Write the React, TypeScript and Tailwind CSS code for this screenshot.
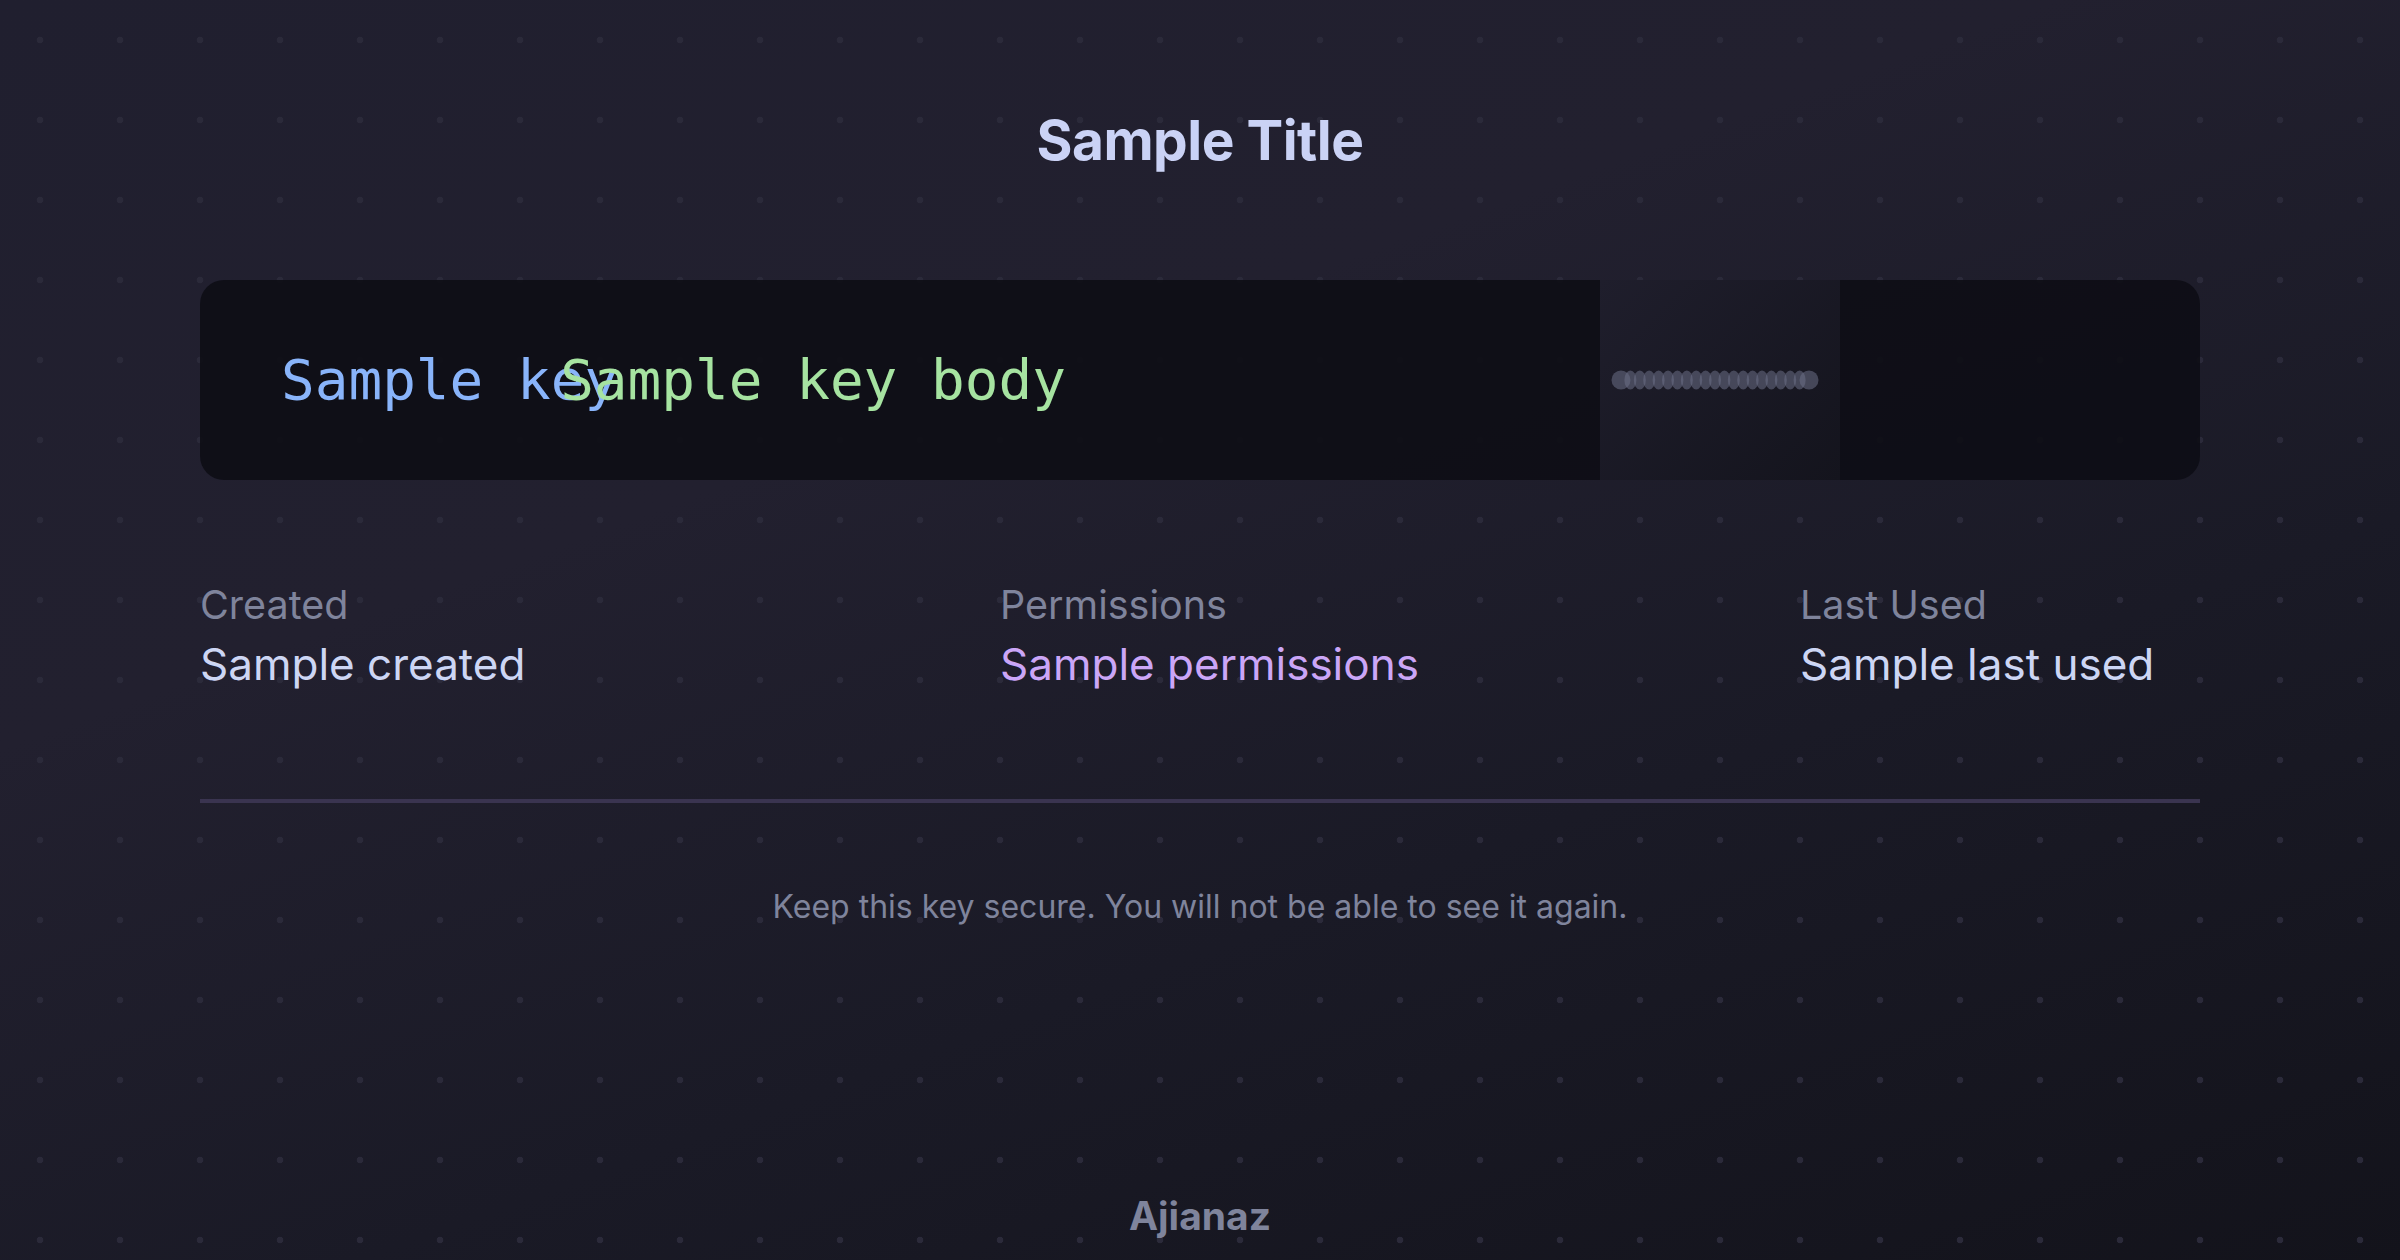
const sans = "font-['Inter','Noto_Sans',sans-serif]";

// Masked bullets shown in place of the hidden key part
function MaskedDots() {
  const dots = Array.from({ length: 21 }, (_, i) => i);
  return (
    <svg width="208" height="20" viewBox="0 0 208 20">
      {dots.map((i) => (
        <ellipse
          key={i}
          cx={10 + i * 9.4}
          cy={10}
          rx={i === 0 || i === 20 ? 9.5 : 6}
          ry={9.5}
          fill="#6c7086"
          fillOpacity={0.55}
        />
      ))}
    </svg>
  );
}

function Meta({ label, value, accent }: { label: string; value: string; accent?: boolean }) {
  return (
    <div className="flex flex-col gap-[16px] whitespace-nowrap">
      <span className="text-[39.5px] leading-none text-[#7f849c]">{label}</span>
      <span className={`text-[44px] leading-none ${accent ? "text-[#cba6f7]" : "text-[#cdd6f4]"}`}>{value}</span>
    </div>
  );
}

export default function App() {
  return (
    <div className={`min-h-screen w-full bg-[linear-gradient(160deg,#201f2f_0%,#22202f_35%,#1a1a26_65%,#13131b_100%)] ${sans}`}>
      <div className="min-h-screen w-full bg-[radial-gradient(circle,#2b2a3a_3px,transparent_3.6px)] bg-[length:80px_80px]">
        <div className="mx-auto flex w-[2000px] flex-col pt-[113px]">
          <h1 className="text-center text-[55px] font-bold leading-none tracking-[-0.5px] text-[#cad2f5]">
            Sample Title
          </h1>

          <div className="mt-[112px] flex h-[200px] overflow-hidden rounded-3xl bg-[#0d0d15]/90">
            <div className="flex flex-1 items-center pl-[81px] font-['DejaVu_Sans_Mono',monospace] text-[56px] leading-none whitespace-nowrap">
              <span className="text-[#89b4fa]">Sample key</span>
              <span className="-ml-[58px] text-[#a6e3a1]">Sample key body</span>
            </div>
            <div className="flex w-[240px] items-center bg-[linear-gradient(135deg,#1f1e2c,#14141d)] pl-[11px]">
              <MaskedDots />
            </div>
            <div className="w-[360px]" />
          </div>

          <div className="mt-[106px] grid grid-cols-[400px_400px_400px] justify-between">
            <Meta label="Created" value="Sample created" />
            <Meta label="Permissions" value="Sample permissions" accent />
            <Meta label="Last Used" value="Sample last used" />
          </div>

          <div className="mt-[113px] h-[4px] w-full bg-[#3a3450]" />

          <p className="mt-[88px] text-center text-[32px] leading-none text-[#7f849c]">
            Keep this key secure. You will not be able to see it again.
          </p>

          <p className="mt-[273px] pb-[30px] text-center text-[39px] font-bold leading-none text-[#7f849c]">
            Ajianaz
          </p>
        </div>
      </div>
    </div>
  );
}
